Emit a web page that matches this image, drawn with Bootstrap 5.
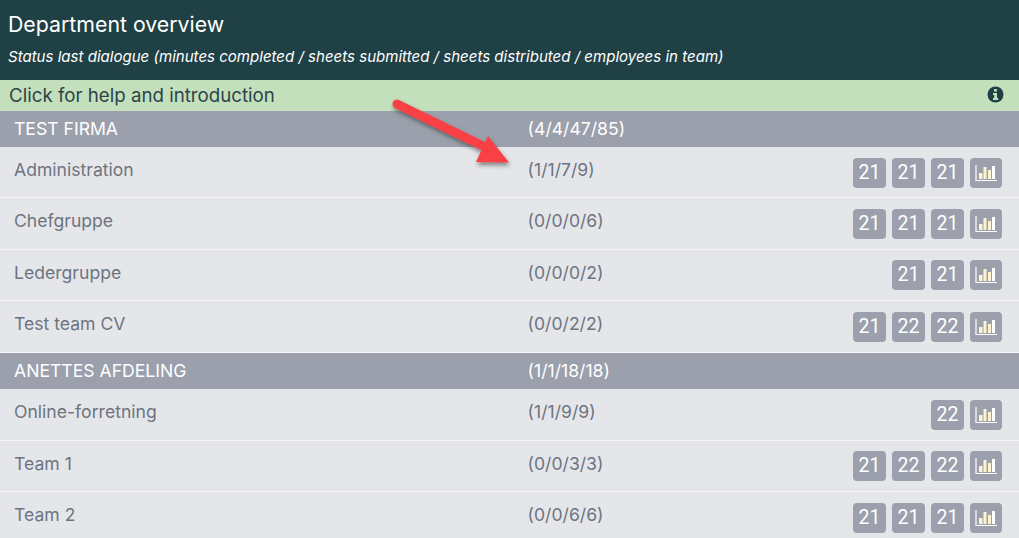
<!doctype html>
<html lang="en"><head><meta charset="utf-8"><title>Department overview</title>
<link href="https://cdn.jsdelivr.net/npm/bootstrap@5.3.0/dist/css/bootstrap.min.css" rel="stylesheet">
<style>
html,body{height:538px;overflow:hidden}
body{font-family:Inter,"Liberation Sans",sans-serif;background:#e5e6ea;position:relative;font-size:17.6px}
.top-head{background:#1f4045;color:#fff;height:80px;padding:11px 8px 0}
.top-head h1{font-size:21.3px;font-weight:400;line-height:26px;margin:0 0 8px}
.top-head p{font-size:15.05px;font-style:italic;line-height:24px;margin:0}
.help-bar{background:#c3dfbb;color:#2c4549;height:31px;padding:0 15px 0 9px;font-size:18.7px;line-height:28px}
.help-bar svg{width:17px;height:17px;margin-top:-2px}
.sect-row{background:#9ba0ac;color:#fff;height:36px;padding:0 14px;font-size:17.6px;line-height:36px}
.sect-row:not(:first-child){height:36.8px}
.dept-row{color:#6d7480;height:51.4px;padding:0 17px 0 14px;border-bottom:1.5px solid #f6f6f8;line-height:46px}
.dept-row:last-child{border-bottom:0}
.name-cell{flex:0 0 513.600px}
.tiles{gap:6px;padding-top:10.5px}
.tile{background:#9ba0ac;color:#fff;width:33px;height:30px;border-radius:4px;font-size:19.5px;line-height:30px;text-align:center;font-family:Roboto,sans-serif}
.tile svg{width:32px;height:30px;display:block}
.tile-chart{width:32px}
.mark-arrow{position:absolute;left:387px;top:93px;width:135px;height:80px;pointer-events:none}
</style></head><body>
<div class="top-head"><h1>Department overview</h1><p>Status last dialogue (minutes completed / sheets submitted / sheets distributed / employees in team)</p></div>
<div class="help-bar d-flex justify-content-between align-items-center"><span>Click for help and introduction</span>
<svg viewBox="0 0 17 17"><circle cx="8.5" cy="8.5" r="8" fill="#1f4045"/><rect x="7" y="3" width="3" height="2.6" rx=".6" fill="#c3dfbb"/><path d="M6 7h4v5h1.2v2H6v-2h1.2V9H6z" fill="#c3dfbb"/></svg></div>
<div id="list"></div>
<svg class="mark-arrow" viewBox="0 0 135 80">
<defs><filter id="sh" x="-20%" y="-20%" width="140%" height="150%"><feDropShadow dx="1" dy="3" stdDeviation="2.2" flood-color="#333" flood-opacity=".55"/></filter></defs>
<g filter="url(#sh)" fill="#f94144"><path d="M10 11 L100 55" stroke="#f94144" stroke-width="9" stroke-linecap="round"/><path d="M101 43 L89 69 L122 69.500 Z"/></g>
</svg>
<script>
const chart='<svg viewBox="0 0 32 30"><path d="M6 7v15.500h21" fill="none" stroke="#fff" stroke-width="1.200"/><rect x="9" y="15" width="3.500" height="6" fill="#fdf3d0"/><rect x="13.500" y="9" width="3" height="12" fill="#fdf3d0"/><rect x="18" y="12" width="3" height="9" fill="#fdf3d0"/><rect x="22" y="8" width="3" height="13" fill="#fff"/></svg>';
const data=[['s','TEST FIRMA','(4/4/47/85)'],['Administration','(1/1/7/9)',[21,21,21]],['Chefgruppe','(0/0/0/6)',[21,21,21]],['Ledergruppe','(0/0/0/2)',[21,21]],['Test team CV','(0/0/2/2)',[21,22,22]],['s','ANETTES AFDELING','(1/1/18/18)'],['Online-forretning','(1/1/9/9)',[22]],['Team 1','(0/0/3/3)',[21,22,22]],['Team 2','(0/0/6/6)',[21,21,21]]];
document.getElementById('list').innerHTML=data.map(r=>r[0]==='s'
?`<div class="sect-row d-flex"><div class="name-cell">${r[1]}</div><div>${r[2]}</div></div>`
:`<div class="dept-row d-flex"><div class="name-cell">${r[0]}</div><div>${r[1]}</div><div class="tiles d-flex ms-auto align-items-start">${r[2].map(n=>`<div class="tile">${n}</div>`).join('')}<div class="tile tile-chart">${chart}</div></div></div>`).join('');
</script>
<script src="https://cdn.jsdelivr.net/npm/bootstrap@5.3.0/dist/js/bootstrap.bundle.min.js"></script>
</body></html>
